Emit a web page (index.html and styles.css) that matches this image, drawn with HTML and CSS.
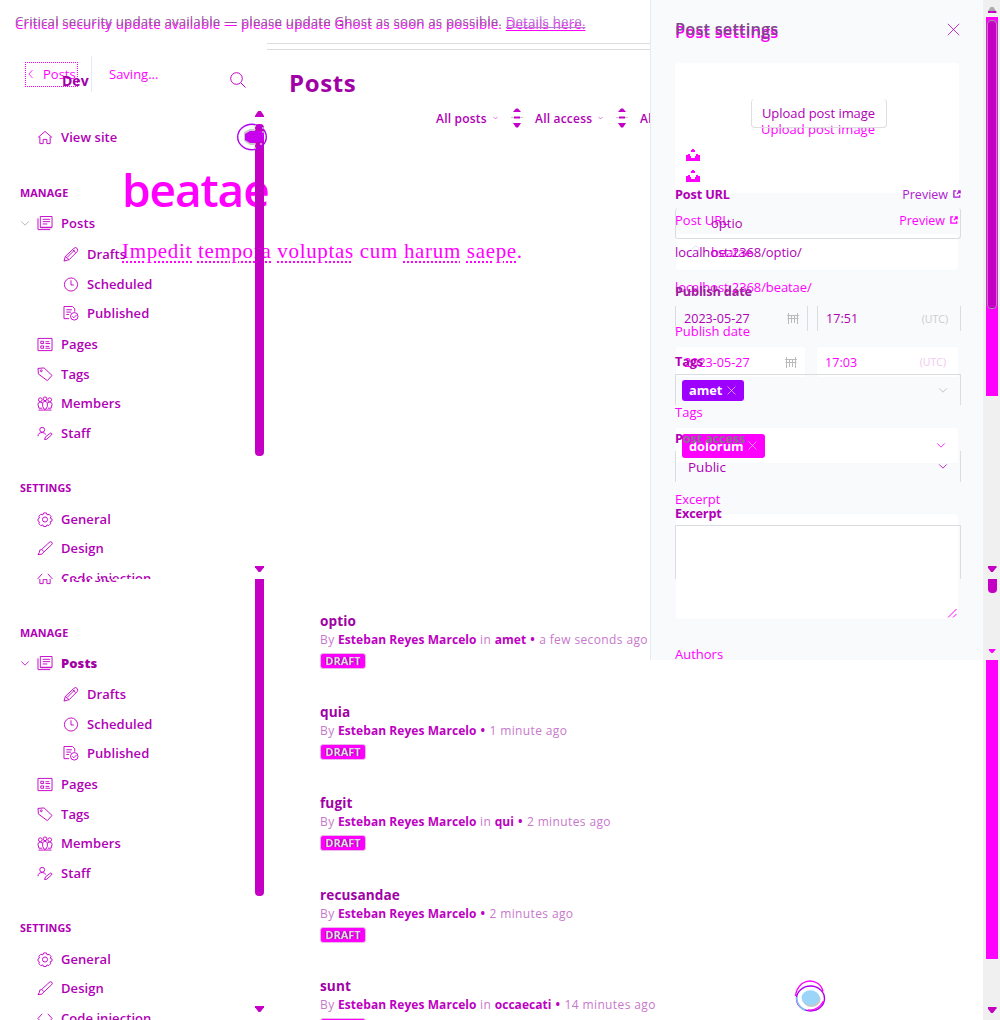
FILE: index.html
```
<!DOCTYPE html>
<html lang="en">
<head>
<meta charset="utf-8">
<title>Ghost admin</title>
<link rel="stylesheet" href="styles.css">
</head>
<body>
<svg class="defs" aria-hidden="true">
<symbol id="home" viewBox="0 0 16 16"><path d="M.5 8 8 1.5 15.500 8M2.500 7v7.500h3.500V10h4v4.500h3.500V7"/></symbol>
<symbol id="posts" viewBox="0 0 16 16"><path d="M3 .5h12.500v11.500H3zM.5 2.500v12h13M5.500 3.500h8M5.500 6h8M5.500 8.500h5M3 12.500h12"/></symbol>
<symbol id="pen" viewBox="0 0 16 16"><path d="m.5 15 1.500-5L11 1.500q2-2 3.500 0t0 3.500L6 13.500zM2 10l4 3.500M10 3l3 3M4 11l8-8"/></symbol>
<symbol id="clock" viewBox="0 0 16 16"><circle cx="8" cy="8" r="7"/><path d="M8 3.500V8.500h3"/></symbol>
<symbol id="published" viewBox="0 0 16 16"><path d="M6 13.500H.5V.5h9L12 3v3M3 4h6M3 6.500h5M3 9h3"/><circle cx="11.500" cy="11" r="4"/><path d="m9.500 11 1.500 1.500 3-3"/></symbol>
<symbol id="pages" viewBox="0 0 16 16"><path d="M.5 1.500h15v13H.5zM3.500 4.500h3V7h-3zM3.500 9.500h3V12h-3zM8.500 5h4M8.500 7h5M8.500 10h4M8.500 12h5"/></symbol>
<symbol id="tag" viewBox="0 0 16 16"><path d="M.5 1.500 7 1l8.500 8-5 5.500L1 7.500z"/><circle cx="4" cy="4" r="1"/></symbol>
<symbol id="members" viewBox="0 0 16 16"><circle cx="8" cy="3" r="2"/><circle cx="3" cy="4" r="2"/><circle cx="13" cy="4" r="2"/><path d="M5.500 11V7Q8 4 10.500 7v4l-1.500 3H7zM5 7Q.5 5.500.5 9l1 4H5M11 7q4.500-1.500 4.500 2l-1 4H11M1 15h14"/></symbol>
<symbol id="staff" viewBox="0 0 16 16"><circle cx="5" cy="4" r="2.600"/><path d="M.5 11q0-4 4.500-4 2.500 0 4 2M7.500 14.500l1-3L14 7.500q2 0 1 2L10 14z"/></symbol>
<symbol id="gear" viewBox="0 0 16 16"><path d="M6.500 1h3l.7 2 2.300-.5 2 2.500-1 1.500 2 1v2l-2 1 .5 2-2 2-2-.7-.8 1.700H6.500l-.7-1.700-2.300.7-2-2 .5-2-1.500-1v-2l1.500-1-.5-2 2-2 2.300.5z"/><circle cx="8" cy="8" r="2.700"/></symbol>
<symbol id="brush" viewBox="0 0 16 16"><path d="M4.500 9 12.500 1.500q2-1.500 3 0t-1 3L7 11.500zM4.500 9Q1.500 9 2 12L.5 14.500q5 .5 6.500-3"/></symbol>
<symbol id="code" viewBox="0 0 16 16"><path d="M5 3 .5 8 5 13M11 3l4.500 5L11 13"/></symbol>
<symbol id="search" viewBox="0 0 16 16"><circle cx="6.500" cy="6.500" r="5.800"/><path d="m11 11 4.500 4.500"/></symbol>
<symbol id="down" viewBox="0 0 10 6"><path d="m.5.5 4.500 4.500L9.500.5"/></symbol>
<symbol id="close" viewBox="0 0 16 16"><path d="m1 1 14 14M15 1 1 15"/></symbol>
<symbol id="ext" viewBox="0 0 9 9"><path d="M3.500 1H1v7h6.500V6M4.500 4.500 8 1M5.500 1H8v3" stroke-width="1.500"/></symbol>
<symbol id="tray" viewBox="0 0 14 12"><path class="solid" d="M0 6h2V5h2v2h1v2h4V7h1V5h2v1h2v6H0zM5 1h1V0h2v1h1v2H5z"/></symbol>
<symbol id="cal" viewBox="0 0 12 11"><path d="M0 2.500h12M.5 5.500h11M1.500 0v11M4.500 2v8M7.500 2v8M10.500 0v11"/></symbol>
<symbol id="link" viewBox="0 0 14 14"><path d="m5 9 4-4M6 4l2-2q2-2 4 0t0 4l-2 2M8 10l-2 2q-2 2-4 0t0-4l2-2"/></symbol>
<symbol id="up-down" viewBox="0 0 12 20"><path class="solid" d="M2 4 5 .5h2L10 4zM2 15l3 4.500h2L10 15z"/><path stroke-width="2" d="M3 9.500h6"/><path class="pale" d="M0 9.500h3M9 9.500h3"/></symbol>
</svg>
<div class="stage">

<div class="editor">
  <div class="alert-copy">Critical security update available — please update Ghost as soon as possible. <u>Details here.</u></div>
  <div class="editor-bar"><div class="back"><svg class="back-arrow" viewBox="0 0 6 10"><path d="M5.500 0 1 5l4.500 5"/></svg><span>Posts</span></div><div class="rule"></div><div class="saving">Saving...</div></div>
  <div class="headline">beatae</div>
  <div class="prose"><i>Impedit</i> <i>tempora</i> <i>voluptas</i> cum <i>harum</i> <i>saepe</i>.</div>
</div>

<section class="screen first">
  <div class="notice">Critical security update available — please update Ghost as soon as possible. <u>Details here.</u></div>
  <div class="columns">
    <aside class="sidebar">
      <div class="brand"><b>Dev</b><svg class="icon"><use href="#search"/></svg></div>
      <div class="row site"><svg class="icon"><use href="#home"/></svg><span>View site</span></div>
      <div class="heading manage">MANAGE</div>
      <div class="row posts"><svg class="fold"><use href="#down"/></svg><svg class="icon"><use href="#posts"/></svg><span>Posts</span></div>
      <div class="row sub"><svg class="icon"><use href="#pen"/></svg><span>Drafts</span></div>
      <div class="row sub"><svg class="icon"><use href="#clock"/></svg><span>Scheduled</span></div>
      <div class="row sub last"><svg class="icon"><use href="#published"/></svg><span>Published</span></div>
      <div class="row top"><svg class="icon"><use href="#pages"/></svg><span>Pages</span></div>
      <div class="row"><svg class="icon"><use href="#tag"/></svg><span>Tags</span></div>
      <div class="row tight"><svg class="icon"><use href="#members"/></svg><span>Members</span></div>
      <div class="row"><svg class="icon"><use href="#staff"/></svg><span>Staff</span></div>
      <div class="heading settings-head">SETTINGS</div>
      <div class="row top"><svg class="icon"><use href="#gear"/></svg><span>General</span></div>
      <div class="row tight"><svg class="icon"><use href="#brush"/></svg><span>Design</span></div>
      <div class="row"><svg class="icon"><use href="#code"/></svg><span>Code injection</span></div>
    </aside>
    <div class="side-scroll"><i class="tri-up"></i><i class="side-thumb"></i><i class="tri-down"></i></div>
    <main class="main">
      <div class="lines"></div>
      <h1>Posts</h1>
      <div class="filters"><span>All posts</span><svg class="mini"><use href="#down"/></svg><svg class="sort"><use href="#up-down"/></svg><span>All access</span><svg class="mini"><use href="#down"/></svg><svg class="sort"><use href="#up-down"/></svg><span>All authors</span></div>
    </main>
  </div>
  <svg class="orb" viewBox="0 0 30 28"><ellipse cx="15" cy="14" rx="14.300" ry="12.700"/><path class="orb-grey" d="M18 6H13L7 9v9l6 4h5z"/><path class="orb-fill" d="M18 8h-5l-5 3v6l5 3h5v-1h7l2-3v-5l-2-3h-7z"/><path class="pale" stroke-dasharray="2 2" d="M18 2v5M18 20v7M26 4v6M23 21h4"/></svg>
</section>

<section class="screen second">
  <aside class="sidebar lower">
    <div class="row site"><svg class="icon"><use href="#home"/></svg><span>View site</span></div>
    <div class="heading manage">MANAGE</div>
    <div class="row posts"><svg class="fold strong"><use href="#down"/></svg><svg class="icon"><use href="#posts"/></svg><b>Posts</b></div>
    <div class="row sub"><svg class="icon"><use href="#pen"/></svg><span>Drafts</span></div>
    <div class="row sub"><svg class="icon"><use href="#clock"/></svg><span>Scheduled</span></div>
    <div class="row sub last"><svg class="icon"><use href="#published"/></svg><span>Published</span></div>
    <div class="row top"><svg class="icon"><use href="#pages"/></svg><span>Pages</span></div>
    <div class="row"><svg class="icon"><use href="#tag"/></svg><span>Tags</span></div>
    <div class="row tight"><svg class="icon"><use href="#members"/></svg><span>Members</span></div>
    <div class="row"><svg class="icon"><use href="#staff"/></svg><span>Staff</span></div>
    <div class="heading settings-head">SETTINGS</div>
    <div class="row top"><svg class="icon"><use href="#gear"/></svg><span>General</span></div>
    <div class="row tight"><svg class="icon"><use href="#brush"/></svg><span>Design</span></div>
    <div class="row"><svg class="icon"><use href="#code"/></svg><span>Code injection</span></div>
  </aside>
  <div class="side-scroll lower-scroll"><i class="side-thumb"></i><i class="tri-down"></i></div>
  <main class="list">
    <article><h2>optio</h2><p>By <b>Esteban Reyes Marcelo</b> in <b>amet</b> <em>•</em> a few seconds ago</p><span class="draft">DRAFT</span></article>
    <article><h2>quia</h2><p>By <b>Esteban Reyes Marcelo</b> <em>•</em> 1 minute ago</p><span class="draft">DRAFT</span></article>
    <article><h2>fugit</h2><p>By <b>Esteban Reyes Marcelo</b> in <b>qui</b> <em>•</em> 2 minutes ago</p><span class="draft">DRAFT</span></article>
    <article><h2>recusandae</h2><p>By <b>Esteban Reyes Marcelo</b> <em>•</em> 2 minutes ago</p><span class="draft">DRAFT</span></article>
    <article><h2>sunt</h2><p>By <b>Esteban Reyes Marcelo</b> in <b>occaecati</b> <em>•</em> 14 minutes ago</p><span class="draft">DRAFT</span></article>
  </main>
  <svg class="orb help" viewBox="0 0 32 32"><path class="hot" d="M1.500 16Q2 9 8 3.500q8-5 16 0 4 3 5 8"/><ellipse cx="16.500" cy="18.500" rx="14" ry="12.500"/><path class="sky-line" d="M2.500 17q0 9 9 13.500"/><path class="hot" d="M14 30q10 1 15.500-9"/><ellipse class="orb-grey" cx="17.500" cy="19.500" rx="9" ry="7.500"/><ellipse class="sky" cx="16.500" cy="17.700" rx="9" ry="7.500"/></svg>
</section>

<div class="panel hot-panel">
  <div class="title">Post settings</div>
  <div class="upload-card"><svg class="tray"><use href="#tray"/></svg><span>Upload post image</span><svg class="tray"><use href="#tray"/></svg></div>
  <div class="label url-label"><span>Post URL</span><span class="preview">Preview <svg><use href="#ext"/></svg></span></div>
  <div class="box slug"><svg class="link"><use href="#link"/></svg><span>beatae</span></div>
  <div class="label address">localhost:2368/beatae/</div>
  <div class="label publish">Publish date</div>
  <div class="dates"><div class="box date"><span>2023-05-27</span><svg class="cal"><use href="#cal"/></svg></div><div class="box time"><span>17:03</span><small>(UTC)</small></div></div>
  <div class="label tags">Tags</div>
  <div class="box select"><span class="chip">dolorum <svg><use href="#close"/></svg></span><svg class="caret"><use href="#down"/></svg></div>
  <div class="label excerpt">Excerpt</div>
  <div class="box area"><svg class="grip" viewBox="0 0 9 9"><path d="M0 8.500 8.500 0M5 8.500 8.500 5"/></svg></div>
  <div class="label authors">Authors</div>
</div>

<div class="panel dark-panel">
  <div class="title"><span>Post settings</span><svg class="icon"><use href="#close"/></svg></div>
  <div class="button">Upload post image</div>
  <div class="label url-label"><b>Post URL</b><span class="preview">Preview <svg><use href="#ext"/></svg></span></div>
  <div class="edge slug">optio</div>
  <div class="label address">localhost:2368/optio/</div>
  <div class="label publish"><b>Publish date</b></div>
  <div class="dates"><div class="edge date"><span>2023-05-27</span><svg class="cal"><use href="#cal"/></svg></div><div class="edge time"><span>17:51</span><small>(UTC)</small></div></div>
  <div class="label tags"><b>Tags</b></div>
  <div class="edge select tag-select"><span class="chip">amet <svg><use href="#close"/></svg></span><svg class="caret pale-caret"><use href="#down"/></svg></div>
  <div class="label access"><b>P</b><b class="muted">ost access</b></div>
  <div class="edge select public"><span>Public</span><svg class="caret"><use href="#down"/></svg></div>
  <div class="label excerpt"><b>Excerpt</b></div>
  <div class="edge area"></div>
</div>

<div class="page-scroll">
  <i class="arrow-grey"></i><div class="hot-thumb"><i></i></div><i class="arrow first-end"></i><i class="stub"></i><i class="arrow small"></i><i class="hot-thumb tail"></i><i class="arrow last-end"></i>
</div>
</div>
</body>
</html>
```
FILE: styles.css
```
* { box-sizing: border-box; }
body { margin: 0; background: #fff; font-family: "Open Sans", "Noto Sans", sans-serif; font-size: 13px; color: #b000b5; }
svg { fill: none; stroke: currentColor; stroke-width: 1; overflow: visible; flex: none; }
i, em { font-style: normal; }
.defs { position: absolute; width: 0; height: 0; }
.solid { fill: currentColor; stroke: none; }
.pale { stroke: #c8c8c8; }
.stage { position: relative; width: 1000px; height: 1020px; overflow: hidden; }

/* Editor layer */
.editor { position: absolute; inset: 0; color: #f0f; display: flex; flex-direction: column; }
.alert-copy, .notice { height: 20px; line-height: 20px; padding-left: 15px; font-size: 13.300px; letter-spacing: .165px; white-space: nowrap; }
.alert-copy { margin-top: 14px; }
.editor-bar { display: flex; align-items: center; height: 36px; margin-top: 22px; }
.back { width: 53px; height: 25px; margin-left: 25px; border: 1px dotted #f0f; display: flex; align-items: center; gap: 10px; padding-left: 2px; }
.back-arrow { width: 5px; height: 8px; }
.rule { width: 1px; height: 36px; background: #e3ecf3; margin-left: 13px; }
.saving { margin-left: 17px; }
.headline { font-size: 46px; font-weight: 600; line-height: 60px; margin: 67px 0 0 122px; letter-spacing: -1.100px; }
.prose { font: 21px/30px "Liberation Serif", serif; margin: 17px 0 0 122px; letter-spacing: .67px; white-space: nowrap; }
.prose i { text-decoration: underline dotted #f0f 2px; text-underline-offset: 3px; }

/* Posts screen */
.screen { position: absolute; left: 0; width: 983px; overflow: hidden; }
.first { top: 0; height: 579px; }
.second { top: 579px; height: 441px; display: flex; }
.notice { margin-top: 11px; color: #97569b; }
.notice u { color: #b77fd0; }
.columns { display: flex; height: 548px; }
.sidebar { width: 255px; flex: none; }
.brand { display: flex; height: 20px; align-items: center; margin: 39px 9px 0 62px; justify-content: space-between; color: #a000a5; }
.brand b { font-size: 14px; }
.icon { width: 16px; height: 16px; color: #c400c8; }
.row { display: flex; height: 20px; align-items: center; padding-left: 37px; gap: 8px; margin-top: 10px; font-weight: 600; letter-spacing: .06px; white-space: nowrap; }
.row .icon { height: 15px; }
.row b { font-weight: 800; color: #a000a5; }
.site { margin-top: 37px; }
.heading { height: 20px; line-height: 20px; padding-left: 20px; font-size: 10.800px; font-weight: 700; letter-spacing: .1px; }
.manage { margin-top: 36px; }
.posts { padding-left: 20px; }
.fold { width: 10px; height: 5px; margin-right: -1px; color: #aaa; }
.strong { color: #c400c8; }
.sub { padding-left: 63px; }
.posts + .sub, .top { margin-top: 11px; }
.last, .tight { margin-top: 9px; }
.settings-head { margin-top: 35px; }
.side-scroll { width: 12px; flex: none; display: flex; flex-direction: column; }
.tri-up, .tri-down { width: 9px; height: 6px; background: #c400c4; }
.tri-up { margin-top: 80px; clip-path: polygon(35% 0, 65% 0, 100% 80%, 100% 100%, 0 100%, 0 80%); }
.tri-down { margin-top: 110px; clip-path: polygon(0 0, 100% 0, 100% 20%, 60% 100%, 40% 100%, 0 20%); }
.side-thumb { width: 9px; height: 332px; margin-top: 7px; background: #c400c4; border-radius: 4px; }
.main { width: 716px; overflow: hidden; }
.lines { height: 7px; margin-top: 12px; border: solid #ddd; border-width: 1px 0; }
h1 { margin: 18px 0 0 22px; font-size: 24px; line-height: 30px; letter-spacing: .6px; color: #a000a5; }
.filters { display: flex; align-items: center; height: 20px; margin: 10px 0 0 169px; font-size: 12px; font-weight: 600; letter-spacing: .2px; white-space: nowrap; }
.filters span { width: 51px; }
.filters span:nth-of-type(2) { width: 57px; }
.mini { width: 5px; height: 4px; margin-left: 6px; }
.sort { width: 12px; height: 20px; margin: 0 12px 0 13px; color: #c400c8; }
.orb { position: absolute; left: 237px; top: 123px; width: 30px; height: 28px; color: #b000ed; stroke-width: 1.400; }
.orb-grey { fill: #c8c8c8; stroke: none; }
.orb-fill { fill: #c800ed; stroke: none; }
.help { left: 794px; top: 401px; width: 32px; height: 32px; }
.hot { stroke: #f0f; }
.sky { fill: #9bd5f8; stroke: none; }
.sky-line { stroke: #79caef; stroke-width: 1.500; }
.lower { margin-top: -49px; }
.lower-scroll .side-thumb { height: 317px; margin-top: 0; border-radius: 0 0 4px 4px; }
.list { padding: 32px 0 0 53px; }
article { height: 91.200px; line-height: 20px; white-space: nowrap; }
h2 { font-size: 13.600px; line-height: 20px; margin: 0; color: #a000a5; font-weight: 700; letter-spacing: .1px; }
article p { margin: -1px 0 0; font-size: 12px; line-height: 20px; letter-spacing: .38px; color: #c878cc; }
article p b { color: #bd00c2; letter-spacing: .06px; }
article p em { color: #bd00c2; font-weight: 700; margin: 0 .5px; }
.draft { display: block; width: 46px; height: 16px; margin-top: 3px; background: #f0f; border: 1px solid #e8b9e8; border-radius: 3px; font-size: 11px; font-weight: 700; line-height: 14px; text-align: center; color: #e3dbe3; text-shadow: 1px 0 #b000b5, -1px 0 #b000b5; }

/* Settings drawer */
.panel { position: absolute; left: 650px; top: 0; width: 333px; display: flex; flex-direction: column; overflow: hidden; padding: 0 22px 0 24px; border-left: 1px solid #e3ecf5; }
.hot-panel { height: 660px; background: #f9fafc; color: #f0f; }
.dark-panel { height: 579px; }
.panel > * { flex: none; }
.title { display: flex; justify-content: space-between; align-items: center; height: 20px; font-size: 16.500px; font-weight: 600; letter-spacing: .12px; }
.hot-panel .title { margin-top: 21px; }
.dark-panel .title { margin-top: 18px; color: #80458a; }
.title .icon { width: 13px; height: 15px; margin: 3px 1px 0 0; }
.upload-card { height: 130px; width: 284px; margin-top: 22px; padding-top: 56px; background: #fff; border-radius: 4px; display: flex; flex-direction: column; align-items: center; line-height: 20px; }
.upload-card span { padding-left: 2px; }
.tray { width: 14px; height: 12px; align-self: flex-start; margin: 10px 0 0 11px; }
.upload-card .tray:first-child { order: 1; }
.upload-card .tray:last-child { order: 2; margin-top: 9px; }
.button { align-self: center; width: 136px; height: 29px; border: 1px solid #dedede; border-top: 0; border-radius: 4px; line-height: 28px; text-align: center; letter-spacing: -.05px; font-weight: 500; }
.dark-panel .button { margin: 61px 0 0 1px; }
.label { display: flex; height: 20px; align-items: center; white-space: nowrap; }
.label b { font-size: 12.700px; letter-spacing: -.15px; }
.preview { display: flex; align-items: center; gap: 5px; margin-left: auto; font-size: 12.500px; }
.preview svg { width: 8px; height: 8px; }
.dark-panel .preview { color: #ae20d0; }
.hot-panel .preview { margin-right: 3px; }
.box { width: 284px; background: #fff; border-radius: 3px; border: 1px solid #f7fafc; display: flex; align-items: center; }
.hot-panel .url-label { margin-top: 17px; }
.hot-panel .slug { height: 38px; margin-top: 3px; padding-left: 10px; gap: 11px; }
.link { width: 14px; height: 14px; color: #dfe9f0; }
.address { letter-spacing: -.1px; }
.hot-panel .address { margin-top: 6px; }
.hot-panel .publish { margin-top: 24px; }
.dates { display: flex; gap: 10px; margin-top: 5px; }
.date, .time { display: flex; align-items: center; justify-content: space-between; font-size: 12.600px; }
.date { width: 131px; padding: 0 8px; }
.time { width: 143px; padding: 0 12px 0 8px; }
.cal { width: 12px; height: 11px; color: #bbb; }
small { font-size: 10.500px; color: #ccc; }
.hot-panel small { color: #f0c8f0; }
.hot-panel .dates .box { height: 32px; }
.hot-panel .tags { margin-top: 24px; }
.select { justify-content: space-between; padding: 0 12px 0 6px; }
.hot-panel .select { height: 37px; margin-top: 5px; }
.chip { display: flex; align-items: center; justify-content: space-between; width: 83px; height: 24px; padding: 0 8px 0 7px; border-radius: 3px; background: #f0f; color: #fff; font-size: 12.800px; font-weight: 700; }
.chip svg { width: 9px; height: 9px; }
.caret { width: 10px; height: 5px; }
.hot-panel .excerpt { margin-top: 25px; }
.hot-panel .area { height: 107px; margin-top: 4px; align-items: flex-end; justify-content: flex-end; }
.grip { width: 9px; height: 9px; margin: 0 1px 1px; }
.authors { margin-top: 24px; font-weight: 500; }
.dark-panel .url-label { margin-top: 56px; }
.edge { width: 286px; border: solid #dadddf; border-width: 0 1px; display: flex; align-items: center; }
.dark-panel .slug { height: 31px; margin-top: 4px; padding-left: 35px; border-bottom-width: 1px; border-radius: 3px; }
.dark-panel .address { margin-top: 3px; font-weight: 500; }
.dark-panel .publish { margin-top: 19px; color: #9c209e; }
.dark-panel .dates { gap: 9px; }
.dark-panel .dates .edge { height: 25px; font-weight: 500; }
.dark-panel .date { width: 133px; }
.dark-panel .time { width: 144px; }
.dark-panel .tags { margin-top: 20px; }
.tag-select { height: 31px; margin-top: 3px; border-top-width: 1px; }
.dark-panel .chip { width: 62px; height: 21px; background: #9d00ff; }
.pale-caret { color: #bbb; }
.access { margin-top: 23px; }
.muted { color: #88708c; }
.public { height: 31px; margin-top: 3px; padding-left: 12px; font-size: 13.500px; font-weight: 500; }
.dark-panel .excerpt { margin-top: 21px; }
.dark-panel .area { height: 71px; margin-top: 2px; border-top-width: 1px; }

/* Page scrollbars */
.page-scroll { position: absolute; left: 983px; top: 0; width: 17px; height: 1020px; background: #f0f0f0; display: flex; flex-direction: column; align-items: center; color: #c400c4; }
.page-scroll > * { flex: none; margin-left: 1px; }
.arrow-grey { width: 9px; height: 6px; margin-top: 7px; background: linear-gradient(#aaa 60%, #c400c4 60%); clip-path: polygon(35% 0, 65% 0, 100% 80%, 100% 100%, 0 100%, 0 80%); }
.hot-thumb { width: 12px; height: 379px; margin-top: 4px; background: #f0f; padding: 3px 1px; }
.hot-thumb i { display: block; height: 289px; border: 1px solid #999; border-radius: 4px; background: #c400c4; }
.arrow { width: 9px; height: 6px; background: currentColor; clip-path: polygon(0 0, 100% 0, 100% 20%, 60% 100%, 40% 100%, 0 20%); }
.first-end { margin-top: 170px; }
.stub { width: 9px; height: 14px; margin-top: 7px; background: currentColor; border-radius: 0 0 4px 4px; }
.small { width: 7px; height: 4px; margin-top: 56px; background: #f0f; }
.tail { height: 299px; margin-top: 7px; }
.last-end { margin-top: 48px; }
```
